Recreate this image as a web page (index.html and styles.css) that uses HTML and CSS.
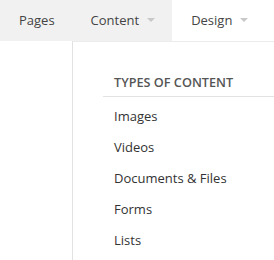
FILE: index.html
```html
<!DOCTYPE html>
<html lang="en">
<head>
    <meta charset="UTF-8">
    <meta name="viewport" content="width=device-width, initial-scale=1.0">
    <title>Menu</title>
    <link rel="stylesheet" href="styles.css">
</head>
<body>

    <nav class="menu">
        <div class="menu-item gray">Pages</div>
        <div class="menu-item gray"><span>Content</span><span class="caret"></span></div>
        <div class="menu-item"><span>Design</span><span class="caret"></span></div>
    </nav>

    <div class="dropdown">
        <div class="dropdown-title">Types of Content</div>
        <ul class="dropdown-list">
            <li>Images</li>
            <li>Videos</li>
            <li>Documents &amp; Files</li>
            <li>Forms</li>
            <li>Lists</li>
        </ul>
    </div>

</body>
</html>
```

FILE: styles.css
```css
body {
    margin: 0;
    font-family: "Open Sans", Arial, sans-serif;
    color: #333;
    background-color: #fff;
    overflow: hidden;
}

.menu {
    display: flex;
    height: 41px;
    white-space: nowrap;
}

.menu-item {
    display: flex;
    align-items: center;
    gap: 8px;
    padding: 0 17px 2px 19px;
    font-size: 13px;
    color: #444;
}

.menu-item.gray {
    background-color: #f1f1f1;
}

.caret {
    width: 0;
    height: 0;
    border-left: 4px solid transparent;
    border-right: 4px solid transparent;
    border-top: 4px solid #c8c8c8;
    margin-top: 1px;
}

.dropdown {
    margin-left: 72px;
    height: 218px;
    border-left: 1px solid #e2e2e2;
    border-top: 1px solid #ececec;
}

.dropdown-title {
    margin: 0 0 0 30px;
    padding: 30px 0 4px 11px;
    line-height: 20px;
    font-size: 12.7px;
    font-weight: 600;
    text-transform: uppercase;
    color: #555;
    border-bottom: 1px solid #e2e2e2;
}

.dropdown-list {
    list-style: none;
    margin: 0;
    padding: 4px 0 0 41px;
}

.dropdown-list li {
    line-height: 31px;
    font-size: 13px;
    color: #333;
}
```
